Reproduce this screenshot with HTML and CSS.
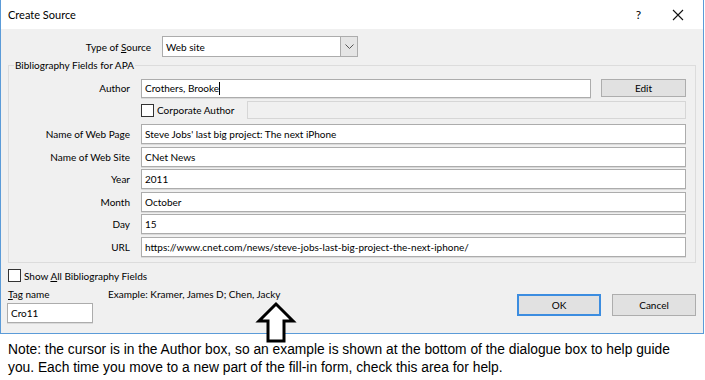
FILE: index.html
```html
<!DOCTYPE html>
<html lang="en">
<head>
    <meta charset="UTF-8">
    <meta name="viewport" content="width=device-width, initial-scale=1.0">
    <title>Create Source</title>
    <link rel="stylesheet" href="styles.css">
</head>
<body>
    <div class="page">
        <div class="dialog">
            <div class="titlebar">
                <span class="title">Create Source</span>
                <span class="help">?</span>
                <svg class="close" width="12" height="12" viewBox="0 0 12 12">
                    <path d="M1 1 L11 11 M11 1 L1 11" stroke="#111" stroke-width="1.1" fill="none"/>
                </svg>
            </div>
            <div class="content">
                <div class="type-row">
                    <span class="type-label">Type of <u>S</u>ource</span>
                    <div class="select">
                        <span class="select-value">Web site</span>
                        <span class="drop">
                            <svg width="9" height="6" viewBox="0 0 9 6">
                                <path d="M0.5 0.5 L4.5 4.5 L8.5 0.5" stroke="#555" stroke-width="1" fill="none"/>
                            </svg>
                        </span>
                    </div>
                </div>

                <fieldset class="group">
                    <legend>Bibliography Fields for APA</legend>
                    <div class="row author-row">
                        <span class="label">Author</span>
                        <div class="field author">Crothers, Brooke<span class="caret"></span></div>
                        <button class="btn edit">Edit</button>
                    </div>
                    <div class="row corp-row">
                        <span class="label"></span>
                        <span class="check"></span>
                        <span class="corp-label">Corporate Author</span>
                        <div class="field disabled"></div>
                    </div>
                    <div class="row">
                        <span class="label">Name of Web Page</span>
                        <div class="field">Steve Jobs' last big project: The next iPhone</div>
                    </div>
                    <div class="row">
                        <span class="label">Name of Web Site</span>
                        <div class="field">CNet News</div>
                    </div>
                    <div class="row">
                        <span class="label">Year</span>
                        <div class="field">2011</div>
                    </div>
                    <div class="row">
                        <span class="label">Month</span>
                        <div class="field">October</div>
                    </div>
                    <div class="row">
                        <span class="label">Day</span>
                        <div class="field">15</div>
                    </div>
                    <div class="row">
                        <span class="label">URL</span>
                        <div class="field">https://www.cnet.com/news/steve-jobs-last-big-project-the-next-iphone/</div>
                    </div>
                </fieldset>

                <div class="show-all">
                    <span class="check"></span>
                    <span>Show <u>A</u>ll Bibliography Fields</span>
                </div>

                <div class="footer">
                    <div class="tag">
                        <div class="tag-head">
                            <span class="tag-label"><u>T</u>ag name</span>
                            <span class="example">Example: Kramer, James D; Chen, Jacky</span>
                        </div>
                        <div class="field tag-field">Cro11</div>
                    </div>
                    <div class="buttons">
                        <button class="btn ok">OK</button>
                        <button class="btn">Cancel</button>
                    </div>
                </div>
            </div>
        </div>

        <!-- pointer from the note up to the example text -->
        <svg class="arrow" width="42" height="44" viewBox="0 0 42 44">
            <polygon points="21,3 4,20 13,20 13,40 29,40 29,20 38,20" fill="#fff" stroke="#000" stroke-width="3" stroke-linejoin="miter"/>
        </svg>

        <p class="note">Note: the cursor is in the Author box, so an example is shown at the bottom of the dialogue box to help guide you. Each time you move to a new part of the fill-in form, check this area for help.</p>
    </div>
</body>
</html>
```

FILE: styles.css
```css
body {
    margin: 0;
    padding: 0;
    background: #ffffff;
    font-family: 'Lato', sans-serif;
    font-size: 10px;
    color: #000;
}

.page {
    position: relative;
    width: 705px;
    height: 380px;
    overflow: hidden;
}

.dialog {
    width: 704px;
    box-sizing: border-box;
    border: 1px solid #5b9bd8;
    border-top: none;
    background: #f0f0f0;
}

.titlebar {
    height: 29px;
    background: #ffffff;
    display: flex;
    align-items: center;
    padding-left: 7px;
}

.title {
    font-size: 11px;
    flex: 1;
}

.help {
    font-size: 12px;
    margin-right: 31px;
}

.close {
    margin-right: 19px;
}

.content {
    padding: 7px 7px 10px 7px;
}

/* type of source */
.type-row {
    display: flex;
    align-items: center;
    height: 21px;
}

.type-label {
    width: 143px;
    text-align: right;
    margin-right: 11px;
}

.select {
    width: 196px;
    height: 21px;
    box-sizing: border-box;
    border: 1px solid #acacac;
    background: #fff;
    display: flex;
    align-items: center;
}

.select-value {
    flex: 1;
    padding-left: 3px;
}

.drop {
    width: 16px;
    height: 19px;
    background: #e5e5e5;
    border-left: 1px solid #acacac;
    display: flex;
    align-items: center;
    justify-content: center;
}

/* group box */
.group {
    margin: 0;
    padding: 6px 9px 5px 0;
    border: 1px solid #dcdcdc;
    min-width: 0;
}

.group legend {
    margin-left: 5px;
    padding: 0 1px;
    line-height: 16px;
}

.row {
    display: flex;
    align-items: center;
    height: 20px;
    white-space: nowrap;
}

.row + .row {
    margin-top: 2.5px;
}

.author-row {
    height: 19px;
    align-items: flex-start;
}

.author-row .label {
    line-height: 19px;
}

.row.corp-row {
    height: 18px;
    margin-top: 3px;
}

.row.corp-row + .row {
    margin-top: 5px;
}

.label {
    width: 121px;
    margin-right: 11px;
    text-align: right;
    flex-shrink: 0;
}

.field {
    flex: 1;
    height: 20px;
    box-sizing: border-box;
    background: #fff;
    border: 1px solid #acacac;
    box-shadow: 0 1px 0 #dadada;
    padding-left: 3px;
    line-height: 18px;
    white-space: nowrap;
    overflow: hidden;
}

.author {
    height: 19px;
    line-height: 17px;
}

.caret {
    display: inline-block;
    width: 1px;
    height: 13px;
    background: #000;
    vertical-align: -3px;
}

.field.disabled {
    height: 18px;
    background: #f0f0f0;
    border-color: #d6d6d6;
    box-shadow: none;
}

.check {
    width: 13px;
    height: 13px;
    box-sizing: border-box;
    border: 1px solid #333;
    background: #fff;
    flex-shrink: 0;
}

.corp-row .check {
    margin-right: 3px;
}

.corp-label {
    width: 90px;
    flex-shrink: 0;
}

/* buttons */
.btn {
    font-family: 'Lato', sans-serif;
    font-size: 10px;
    color: #000;
    background: #e1e1e1;
    border: 1px solid #adadad;
    padding: 0;
    width: 84px;
    height: 22px;
}

.edit {
    width: 85px;
    height: 18px;
    margin-left: 10px;
}

.ok {
    border: 2px solid #3c8de0;
}

.buttons {
    display: flex;
    gap: 11px;
    margin-left: auto;
    margin-top: 10px;
}

/* bottom part */
.show-all {
    display: flex;
    align-items: center;
    gap: 3px;
    height: 16px;
    margin-top: 5px;
}

.footer {
    display: flex;
    align-items: flex-start;
}

.tag-head {
    display: flex;
    height: 16px;
    line-height: 16px;
    margin-top: 2px;
    white-space: nowrap;
}

.tag-label {
    width: 100px;
}

.tag-field {
    width: 86px;
    margin-left: -1px;
    margin-top: 1px;
    flex: none;
}

.arrow {
    position: absolute;
    left: 255px;
    top: 301px;
}

.note {
    margin: 0;
    padding: 7px 8px 0 8px;
    max-width: 665px;
    font-family: 'Liberation Sans', Arial, sans-serif;
    font-size: 13.8px;
    line-height: 18px;
}
```
